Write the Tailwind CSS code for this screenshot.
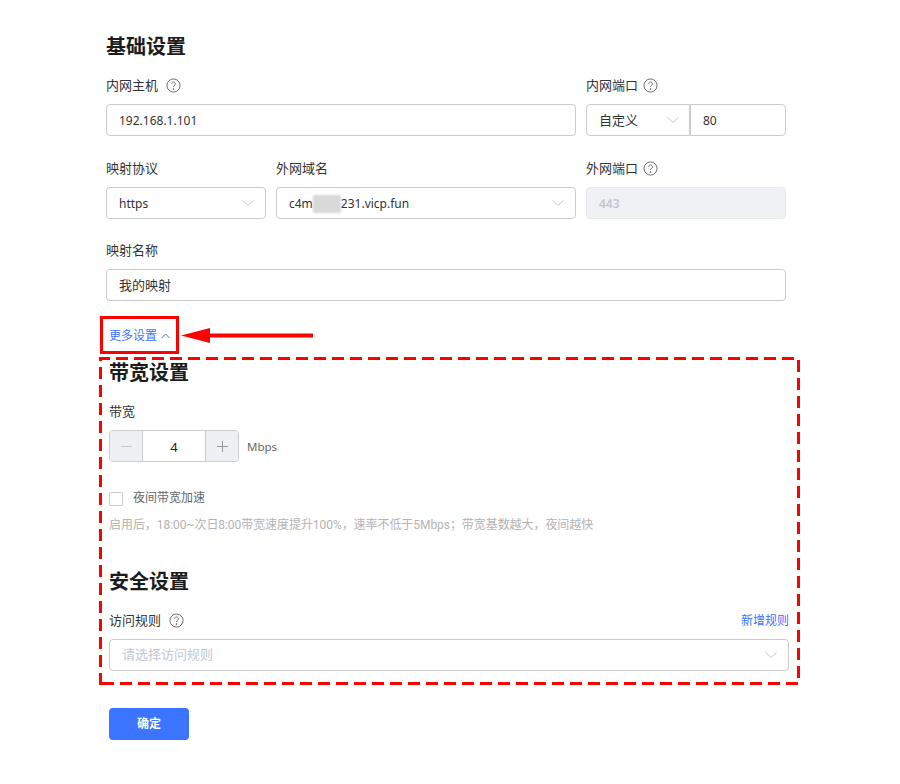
<!DOCTYPE html>
<html lang="zh-CN">
<head>
<meta charset="utf-8">
<script src="https://cdn.jsdelivr.net/npm/@tailwindcss/browser@4"></script>
</head>
<body class="bg-white">
<div class="relative w-[900px] h-[784px] overflow-hidden bg-white text-[13px] text-[#333] font-['Noto_Sans','Noto_Sans_CJK_SC',sans-serif]">
  <div class="w-[680px] ml-[106px] pt-[32px]">
    <h2 class="h-[28px] pt-[1px] text-[20px] leading-[28px] font-bold text-[#1c1c1c]">基础设置</h2>
    <div class="flex gap-[10px] mt-[15px]">
      <div class="w-[470px]">
        <div class="flex items-center gap-[8px] h-[20px] leading-[20px]">内网主机
          <svg class="w-[15px] h-[15px] text-[#666]" viewBox="0 0 16 16" fill="none" stroke="currentColor"><circle cx="8" cy="8" r="7"/><path d="M6 6.2a2 2 0 1 1 3.1 1.7c-.7.5-1.1.9-1.1 1.8"/><circle cx="8" cy="11.8" r=".5" fill="currentColor"/></svg>
        </div>
        <div class="mt-[9px] h-[32px] border border-[#ccc] rounded-[4px] px-[12px] pt-[1px] leading-[30px] text-[12px]">192.168.1.101</div>
      </div>
      <div class="w-[200px]">
        <div class="flex items-center gap-[5px] h-[20px] leading-[20px]">内网端口
          <svg class="w-[15px] h-[15px] text-[#666]" viewBox="0 0 16 16" fill="none" stroke="currentColor"><circle cx="8" cy="8" r="7"/><path d="M6 6.2a2 2 0 1 1 3.1 1.7c-.7.5-1.1.9-1.1 1.8"/><circle cx="8" cy="11.8" r=".5" fill="currentColor"/></svg>
        </div>
        <div class="flex mt-[9px]">
          <div class="w-[104px] h-[32px] border border-[#ccc] rounded-l-[4px] pl-[12px] pr-[10px] flex items-center justify-between"><span class="pt-[1px]">自定义</span>
            <svg class="w-[12px] h-[8px] text-[#c4c7cf]" viewBox="0 0 12 8" fill="none" stroke="currentColor"><path d="M.5 1.500l5.500 5 5.500-5"/></svg>
          </div>
          <div class="w-[96px] h-[32px] border border-[#ccc] rounded-r-[4px] pl-[12px] pt-[1px] leading-[30px] text-[12px]">80</div>
        </div>
      </div>
    </div>
    <div class="flex gap-[10px] mt-[22px]">
      <div class="w-[160px]">
        <div class="h-[20px] leading-[20px]">映射协议</div>
        <div class="mt-[9px] h-[32px] border border-[#ccc] rounded-[4px] pl-[12px] pr-[11px] flex items-center justify-between text-[12px]"><span class="pt-[1px]">https</span>
          <svg class="w-[12px] h-[8px] text-[#c4c7cf]" viewBox="0 0 12 8" fill="none" stroke="currentColor"><path d="M.5 1.500l5.500 5 5.500-5"/></svg>
        </div>
      </div>
      <div class="w-[300px]">
        <div class="h-[20px] leading-[20px]">外网域名</div>
        <div class="mt-[9px] h-[32px] border border-[#ccc] rounded-[4px] pl-[12px] pr-[11px] flex items-center justify-between text-[12px]">
          <span class="flex items-center pt-[1px]">c4m<span class="w-[28px] h-[18px] bg-[#d9d9d9] blur-[1px]"></span>231.vicp.fun</span>
          <svg class="w-[12px] h-[8px] text-[#c4c7cf]" viewBox="0 0 12 8" fill="none" stroke="currentColor"><path d="M.5 1.500l5.500 5 5.500-5"/></svg>
        </div>
      </div>
      <div class="w-[200px]">
        <div class="flex items-center gap-[5px] h-[20px] leading-[20px]">外网端口
          <svg class="w-[15px] h-[15px] text-[#666]" viewBox="0 0 16 16" fill="none" stroke="currentColor"><circle cx="8" cy="8" r="7"/><path d="M6 6.2a2 2 0 1 1 3.1 1.7c-.7.5-1.1.9-1.1 1.8"/><circle cx="8" cy="11.8" r=".5" fill="currentColor"/></svg>
        </div>
        <div class="mt-[9px] h-[32px] border border-[#e8e9ed] bg-[#f0f1f4] rounded-[4px] pl-[12px] pt-[1px] leading-[30px] text-[12px] text-[#c3c7d0] font-semibold">443</div>
      </div>
    </div>
    <div class="mt-[21px] h-[20px] leading-[20px]">映射名称</div>
    <div class="mt-[9px] h-[32px] border border-[#ccc] rounded-[4px] px-[12px] leading-[30px]">我的映射</div>
    <div class="mt-[24px] ml-[3px] h-[20px] pt-[1px] flex items-center gap-[4px] text-[#3b74ff] text-[12px]">更多设置
      <svg class="w-[9px] h-[6px]" viewBox="0 0 9 6" fill="none" stroke="currentColor"><path d="M.5 5l4-4 4 4"/></svg>
    </div>
  </div>

  <div class="w-[680px] ml-[109px] mt-[13px]">
    <h2 class="h-[28px] pt-[1px] text-[20px] leading-[28px] font-bold text-[#1c1c1c]">带宽设置</h2>
    <div class="mt-[15px] h-[20px] leading-[20px]">带宽</div>
    <div class="flex items-center mt-[9px]">
      <div class="flex w-[130px] h-[32px] border border-[#ccc] rounded-[4px] overflow-hidden">
        <div class="w-[33px] bg-[#eff0f3] border-r border-[#ccc] flex items-center justify-center">
          <svg class="w-[11px] h-[11px] text-[#c4c7cf]" viewBox="0 0 11 11" stroke="currentColor"><path d="M0 5.5h11"/></svg>
        </div>
        <div class="flex-1 text-center pt-[1px] leading-[30px] text-[#222]">4</div>
        <div class="w-[33px] bg-[#eff0f3] border-l border-[#ccc] flex items-center justify-center">
          <svg class="w-[11px] h-[11px] text-[#999]" viewBox="0 0 11 11" stroke="currentColor"><path d="M0 5.5h11M5.5 0v11"/></svg>
        </div>
      </div>
      <span class="ml-[8px] pt-[2px] text-[11.5px] text-[#666]">Mbps</span>
    </div>
    <div class="flex items-center mt-[26px] h-[20px] text-[12px] text-[#666]">
      <span class="w-[14px] h-[14px] border border-[#ccc] rounded-[2px] mr-[10px] mt-[2px]"></span>夜间带宽加速
    </div>
    <div class="mt-[6px] h-[20px] pt-[1px] leading-[20px] text-[12px] tracking-[-0.06px] text-[#b3b3b3] font-['Roboto','Noto_Sans_CJK_SC',sans-serif]">启用后，18:00~次日8:00带宽速度提升100%，速率不低于5Mbps；带宽基数越大，夜间越快</div>
    <h2 class="mt-[33px] h-[28px] pt-[1px] text-[20px] leading-[28px] font-bold text-[#1c1c1c]">安全设置</h2>
    <div class="mt-[15px] flex items-center justify-between h-[20px] pt-[1px]">
      <div class="flex items-center gap-[8px]">访问规则
        <svg class="w-[15px] h-[15px] text-[#666]" viewBox="0 0 16 16" fill="none" stroke="currentColor"><circle cx="8" cy="8" r="7"/><path d="M6 6.2a2 2 0 1 1 3.1 1.7c-.7.5-1.1.9-1.1 1.8"/><circle cx="8" cy="11.8" r=".5" fill="currentColor"/></svg>
      </div>
      <span class="text-[12px] text-[#3b74ff]">新增规则</span>
    </div>
    <div class="mt-[9px] h-[32px] border border-[#ccc] rounded-[4px] pl-[12px] pr-[11px] flex items-center justify-between text-[#c3c7d0]">请选择访问规则
      <svg class="w-[12px] h-[8px] text-[#c4c7cf]" viewBox="0 0 12 8" fill="none" stroke="currentColor"><path d="M.5 1.500l5.500 5 5.500-5"/></svg>
    </div>
    <button class="block mt-[37px] w-[80px] h-[32px] rounded-[4px] bg-[#3b74ff] text-white text-[12px] font-bold">确定</button>
  </div>

  <!-- annotations -->
  <div class="absolute left-[100px] top-[316px] w-[79px] h-[38px] border-[3px] border-[#f00]"></div>
  <svg class="absolute left-[180px] top-[326px]" width="134" height="20" viewBox="0 0 134 20"><path d="M1 9.500L30 2V7.500H133V11.500H30V17Z" fill="#f00"/></svg>
  <svg class="absolute left-[98px] top-[356px]" width="704" height="330" fill="none"><path d="M2.500 329V2.500H700.500V327.500H2" stroke="#f00" stroke-width="3" stroke-dasharray="12 6"/></svg>
</div>
</body>
</html>
